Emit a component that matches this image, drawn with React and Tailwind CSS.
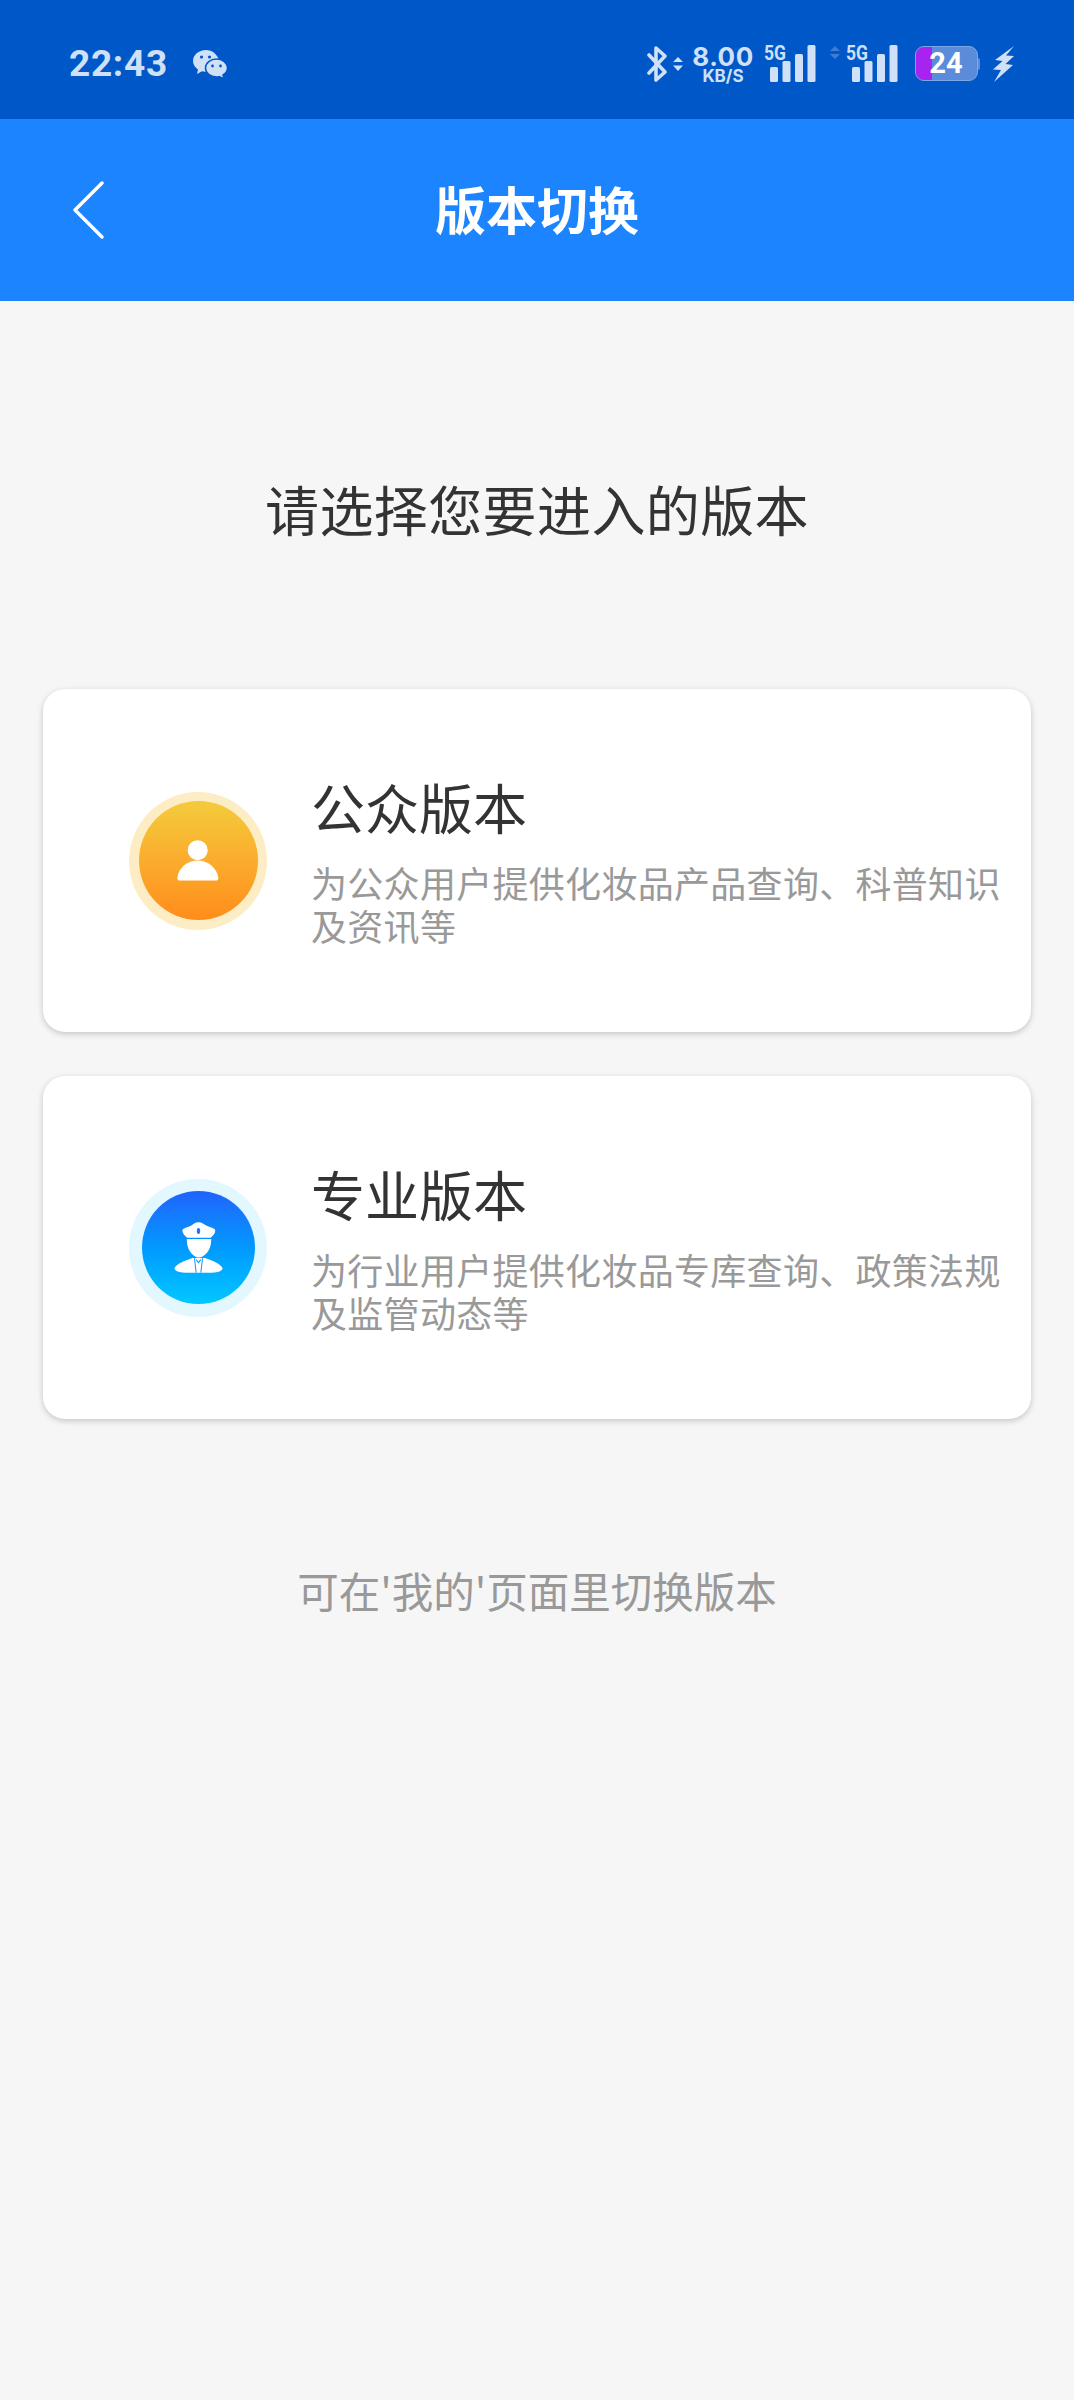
const cjk = { fontFamily: '"Noto Sans CJK SC", "Noto Sans", sans-serif' };

function Signal({ dim }) {
  return (
    <svg width={dim ? 68 : 52} height="38" viewBox={dim ? "0 0 68 38" : "0 0 52 38"} className="block overflow-visible">
      {dim && <path d="M5 1 L10 6 L0 6 Z M5 14 L10 9 L0 9 Z" fill="#3f7bd0" />}
      <g transform={dim ? "translate(16 0)" : "translate(0 0)"}>
        <text x="0" y="15" fontSize="20" fontWeight="700" fill="#cfe0f7" fontFamily="Roboto, sans-serif" textLength="22" lengthAdjust="spacingAndGlyphs">5G</text>
        <rect x="6" y="22" width="8" height="15" rx="1.5" fill="#cfe0f7" />
        <rect x="18.5" y="16" width="8" height="21" rx="1.5" fill="#cfe0f7" />
        <rect x="31" y="9" width="8" height="28" rx="1.5" fill="#cfe0f7" />
        <rect x="43.5" y="0" width="8" height="37" rx="1.5" fill="#cfe0f7" />
      </g>
    </svg>
  );
}

function StatusBar() {
  return (
    <div className="h-[119px] bg-[#0058c8] flex items-center justify-between pl-[69px] pr-[60px] pt-[8px]">
      <div className="flex items-center">
        <span className="text-[37px] font-bold leading-none text-[#cfe0f7] tracking-[0.7px]" style={{ fontFamily: 'Roboto, sans-serif' }}>22:43</span>
        <svg width="36" height="30" viewBox="0 0 36 30" className="ml-[24px]">
          <path d="M14 1 C6.5 1 1 6 1 12 C1 15.5 3 18.5 6 20.5 L5 25 L10 22.3 C11 22.6 12 22.7 13 22.8 C20 23 27 18 27 11 C25 5 20 1 14 1 Z" fill="#cfe0f7" />
          <path d="M24.5 10 C18.5 10 13.5 14 13.5 19 C13.5 24 18.5 28 24.5 28 C25.5 28 26.5 27.9 27.3 27.6 L32 30 L31 26 C33.7 24.4 35.5 21.9 35.5 19 C35.5 14 30.5 10 24.5 10 Z" fill="#cfe0f7" stroke="#0058c8" strokeWidth="1.5" />
          <circle cx="9.5" cy="8" r="1.6" fill="#0058c8" />
          <circle cx="17.5" cy="8" r="1.6" fill="#0058c8" />
          <circle cx="20.5" cy="17" r="1.4" fill="#0058c8" />
          <circle cx="28.5" cy="17" r="1.4" fill="#0058c8" />
        </svg>
      </div>
      <div className="flex items-center">
        <svg width="20" height="36" viewBox="0 0 20 36" fill="none" stroke="#cfe0f7" strokeWidth="3.6" strokeLinejoin="round" strokeLinecap="round">
          <path d="M2 9 L18 26 L9 34 L9 2 L18 10 L2 27" />
        </svg>
        <svg width="10" height="14" viewBox="0 0 10 14" className="ml-[6px]">
          <path d="M5 0 L10 5 L0 5 Z M5 14 L10 8.5 L0 8.5 Z" fill="#cfe0f7" />
        </svg>
        <div className="ml-[10px] w-[60px] flex flex-col items-center font-bold text-[#cfe0f7]" style={{ fontFamily: 'Inter, sans-serif' }}>
          <span className="text-[26px] leading-[24px] tracking-[0.5px]">8.00</span>
          <span className="text-[17px] leading-[14px]">KB/S</span>
        </div>
        <div className="ml-[11px]"><Signal /></div>
        <div className="ml-[14px]"><Signal dim /></div>
        <div className="ml-[17px] relative w-[66px] h-[35px] flex">
          <div className="w-[63px] h-[35px] rounded-[9px] bg-[#5b8cdb] border border-[#7da6e6] overflow-hidden flex">
            <div className="w-[16px] bg-[#a723f0]"></div>
          </div>
          <div className="w-[2px] h-[12px] bg-[#5b8cdb] self-center rounded-r-sm"></div>
          <span className="absolute left-[13px] top-0 w-[36px] text-center text-[29px] leading-[35px] font-bold text-white" style={{ fontFamily: 'Roboto, sans-serif' }}>24</span>
        </div>
        <svg width="21" height="36" viewBox="0 0 21 36" className="ml-[12px]">
          <path d="M21 0 L2 14 L9.5 15 L0 23.5 L8 24 L1 36 L20 19 L12.5 18 L21 10 L13 9.5 Z" fill="#cfe0f7" />
        </svg>
      </div>
    </div>
  );
}

function Header() {
  return (
    <div className="h-[182px] bg-[#1c84ff] flex items-center">
      <svg width="34" height="58" viewBox="0 0 34 58" fill="none" stroke="white" strokeWidth="3.4" strokeLinecap="round" strokeLinejoin="round" className="ml-[72px] shrink-0 mb-[1px]">
        <path d="M30 2 L3 29 L30 56" />
      </svg>
      <h1 className="flex-1 text-center text-[51px] font-bold leading-none text-white pr-[106px] pb-[3px]" style={cjk}>版本切换</h1>
    </div>
  );
}

function PersonIcon() {
  return (
    <svg width="42" height="41" viewBox="228 207 130 126">
      <circle cx="292" cy="238" r="31" fill="white" />
      <path d="M229 324 C232 292 262 270 292 270 C322 270 352 292 356 324 C356 329 353 332 349 332 L236 332 C232 332 229 329 229 324 Z" fill="white" />
    </svg>
  );
}

function PoliceIcon() {
  return (
    <svg width="49" height="51" viewBox="217 184 146 152">
      <path d="M290 185 C300 185 306 191 316 196 C326 201 340 202 340 210 C340 218 332 226 326 231 L256 231 C250 226 242 218 242 210 C242 202 256 201 266 196 C274 191 280 185 290 185 Z" fill="white" />
      <ellipse cx="290" cy="211" rx="5" ry="9" fill="#1476ff" />
      <path d="M255 235 L328 235 C328 252 324 264 318 272 C311 281 301 290 291 290 C281 290 271 281 265 272 C259 264 255 252 255 235 Z" fill="white" />
      <path d="M218 322 C225 307 252 298 272 291 L310 291 C330 298 355 307 362 322 C360 332 345 335 328 335 L252 335 C235 335 220 332 218 322 Z" fill="white" />
      <path d="M278 292 L283 335 M302 292 L297 335 M283 296 L290 305 L297 296" fill="none" stroke="#0e97ff" strokeWidth="3" />
    </svg>
  );
}

function Card({ ring, inner, grad, icon, title, lines }) {
  return (
    <div className="h-[343px] rounded-[22px] bg-white shadow-[0_2px_6px_rgba(0,0,0,0.2)] flex items-center pl-[86px]">
      <div className={`w-[138px] h-[138px] rounded-full flex items-center justify-center shrink-0 ${ring}`}>
        <div className={`rounded-full flex items-center justify-center bg-gradient-to-b ${inner} ${grad}`}>
          {icon}
        </div>
      </div>
      <div className="ml-[44px] pb-[3px]" style={cjk}>
        <div className="text-[54px] leading-[72px] text-[#333333]">{title}</div>
        <div className="mt-[18px] text-[36px] leading-[43px] tracking-[0.3px] text-[#999999] whitespace-nowrap">
          {lines.map((l) => <div key={l}>{l}</div>)}
        </div>
      </div>
    </div>
  );
}

export default function App() {
  return (
    <div className="w-[1074px] h-[2400px] bg-[#f6f6f6] flex flex-col" style={cjk}>
      <StatusBar />
      <Header />
      <h2 className="mt-[170px] text-center text-[54px] leading-[76px] tracking-[0.4px] font-normal text-[#333333]">请选择您要进入的版本</h2>
      <div className="mt-[142px] mx-[43px] flex flex-col gap-[44px]">
        <Card
          ring="bg-[#fdedc5]"
          inner="w-[119px] h-[119px]"
          grad="from-[#f3cb3c] to-[#ff8c1a]"
          icon={<PersonIcon />}
          title="公众版本"
          lines={["为公众用户提供化妆品产品查询、科普知识", "及资讯等"]}
        />
        <Card
          ring="bg-[#e2f7fe]"
          inner="w-[113px] h-[113px]"
          grad="from-[#1f63fb] to-[#00c8ff]"
          icon={<PoliceIcon />}
          title="专业版本"
          lines={["为行业用户提供化妆品专库查询、政策法规", "及监管动态等"]}
        />
      </div>
      <p className="mt-[141px] text-center text-[41.5px] leading-[60px] text-[#999999]">可在'我的'页面里切换版本</p>
    </div>
  );
}
